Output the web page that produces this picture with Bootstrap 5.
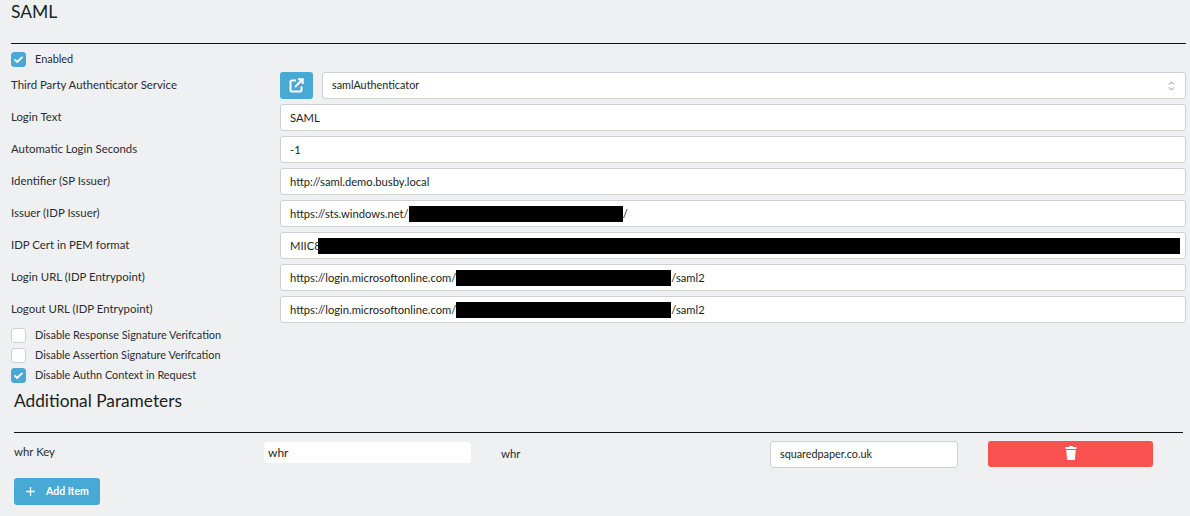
<!DOCTYPE html>
<html lang="en">
<head>
<meta charset="utf-8">
<title>SAML</title>
<link href="https://cdn.jsdelivr.net/npm/bootstrap@5.3.0/dist/css/bootstrap.min.css" rel="stylesheet">
<style>
html,body{height:516px;overflow:hidden}
body{background:#eff0f2;font-family:Lato,"Open Sans",sans-serif;font-size:11.4px;color:#2b2d30}
.pg{padding:0 4px 0 11px}
.ttl{font-size:17.5px;font-weight:400;line-height:24px;margin:0;height:43px;color:#1c1e20}
.rule{height:1px;background:#111}
.chk{display:flex;align-items:center;gap:9px;height:20px;font-size:10.9px}
.box{width:15px;height:15px;border:1px solid #cdd0d6;border-radius:3px;background:#fff;flex:none;display:flex;align-items:center;justify-content:center}
.box.on{background:#48a9d4;border-color:#48a9d4}
.first{margin-top:5px}
.frow{display:flex;align-items:center;height:27px;margin-bottom:5px}
.frow.top{margin-top:3px}
.frow.last{margin-bottom:2px}
.lab{width:269px;flex:none;padding-bottom:2px}
.fld{flex:1;min-width:0;height:27px;background:#fff;border:1px solid #ccd0d6;border-radius:3px;font-size:11.2px;padding:0 9px;display:flex;align-items:center;white-space:nowrap;color:#1c1e20;line-height:1}
.fld.pick{justify-content:space-between;padding-right:10px;font-size:10.8px}
.ico{width:33px;height:27px;background:#48a9d4;border:0;border-radius:3px;padding:0;margin-right:9px;flex:none;display:flex;align-items:center;justify-content:center}
.red{display:inline-block;background:#000;height:16px;flex:none}
.red.w1{width:214px}
.red.w2{width:862px;margin-left:-3px}
.red.w3{width:215px}
.ttl2{font-size:17.3px;font-weight:400;line-height:22px;margin:0;height:42px;color:#1c1e20}
.sec{padding-left:3px;margin-top:5px}
.rule2{height:1px;background:#111;margin-right:3px}
.prow{display:flex;align-items:flex-start;height:45px;padding-top:8px}
.k1{width:250px;flex:none;line-height:21px}
.kin{width:207px;height:21px;margin-top:1px;background:#fff;border-radius:4px;flex:none;font-size:12px;padding-left:4px;display:flex;align-items:center;color:#1c1e20}
.k2{width:299px;padding-left:30px;flex:none;line-height:21px;margin-top:2px}
.fld.vin{width:188px;flex:none;font-size:10.8px}
.del{width:165px;height:26px;margin-left:30px;background:#f95050;border:0;border-radius:3px;padding:0 0 2px;flex:none;display:flex;align-items:center;justify-content:center}
.add{height:27px;width:86px;background:#48a9d4;border:0;border-radius:3px;color:#fff;font-size:10.5px;font-weight:700;display:flex;align-items:center;padding:0 0 0 12px;gap:11px}
</style>
</head>
<body>
<div class="pg">
  <h1 class="ttl">SAML</h1>
  <div class="rule"></div>
  <div class="chk first"><span class="box on"><svg width="11" height="9" viewBox="0 0 11 9"><path d="M1.5 4.5 4.2 7 9.5 1.8" fill="none" stroke="#fff" stroke-width="1.8"/></svg></span><span>Enabled</span></div>
  <div class="frow top">
    <div class="lab">Third Party Authenticator Service</div>
    <button class="ico" type="button" aria-label="Open"><svg width="15" height="15" viewBox="0 0 15 15" fill="none" stroke="#fff" stroke-width="2"><path d="M7 2.500H2.800a1.300 1.300 0 0 0-1.300 1.300v8.400a1.300 1.300 0 0 0 1.300 1.300h8.400a1.300 1.300 0 0 0 1.300-1.300V8.500"/><path d="M6 9 13.500 1.500M9 1.300h4.700V6"/></svg></button>
    <div class="fld pick"><span>samlAuthenticator</span><svg width="7" height="10" viewBox="0 0 7 10" fill="none" stroke="#8d9096" stroke-width="1"><path d="M1 3.500 3.500 1 6 3.500M1 6.500 3.500 9 6 6.500"/></svg></div>
  </div>
  <div class="frow"><div class="lab">Login Text</div><div class="fld">SAML</div></div>
  <div class="frow"><div class="lab">Automatic Login Seconds</div><div class="fld">-1</div></div>
  <div class="frow"><div class="lab">Identifier (SP Issuer)</div><div class="fld">http://saml.demo.busby.local</div></div>
  <div class="frow"><div class="lab">Issuer (IDP Issuer)</div><div class="fld">https://sts.windows.net/<span class="red w1"></span>/</div></div>
  <div class="frow"><div class="lab">IDP Cert in PEM format</div><div class="fld">MIIC8<span class="red w2"></span></div></div>
  <div class="frow"><div class="lab">Login URL (IDP Entrypoint)</div><div class="fld">https://login.microsoftonline.com/<span class="red w3"></span>/saml2</div></div>
  <div class="frow last"><div class="lab">Logout URL (IDP Entrypoint)</div><div class="fld">https://login.microsoftonline.com/<span class="red w3"></span>/saml2</div></div>
  <div class="chk"><span class="box"></span><span>Disable Response Signature Verifcation</span></div>
  <div class="chk"><span class="box"></span><span>Disable Assertion Signature Verifcation</span></div>
  <div class="chk"><span class="box on"><svg width="11" height="9" viewBox="0 0 11 9"><path d="M1.5 4.5 4.2 7 9.5 1.8" fill="none" stroke="#fff" stroke-width="1.8"/></svg></span><span>Disable Authn Context in Request</span></div>
  <div class="sec">
    <h2 class="ttl2">Additional Parameters</h2>
    <div class="rule2"></div>
    <div class="prow">
      <div class="k1">whr Key</div>
      <div class="kin">whr</div>
      <div class="k2">whr</div>
      <div class="fld vin">squaredpaper.co.uk</div>
      <button class="del" type="button" aria-label="Delete"><svg width="12" height="14" viewBox="0 0 12 14" fill="#fff"><path d="M4.500 0h3l.6 1h3.400v2H.5V1h3.400zM1.300 4h9.400l-.7 9a1 1 0 0 1-1 1H3a1 1 0 0 1-1-1z"/></svg></button>
    </div>
    <button class="add" type="button"><svg width="9" height="9" viewBox="0 0 9 9" stroke="#fff" stroke-width="1.300"><path d="M4.500 0v9M0 4.500h9"/></svg><span>Add Item</span></button>
  </div>
</div>
</body>
</html>
